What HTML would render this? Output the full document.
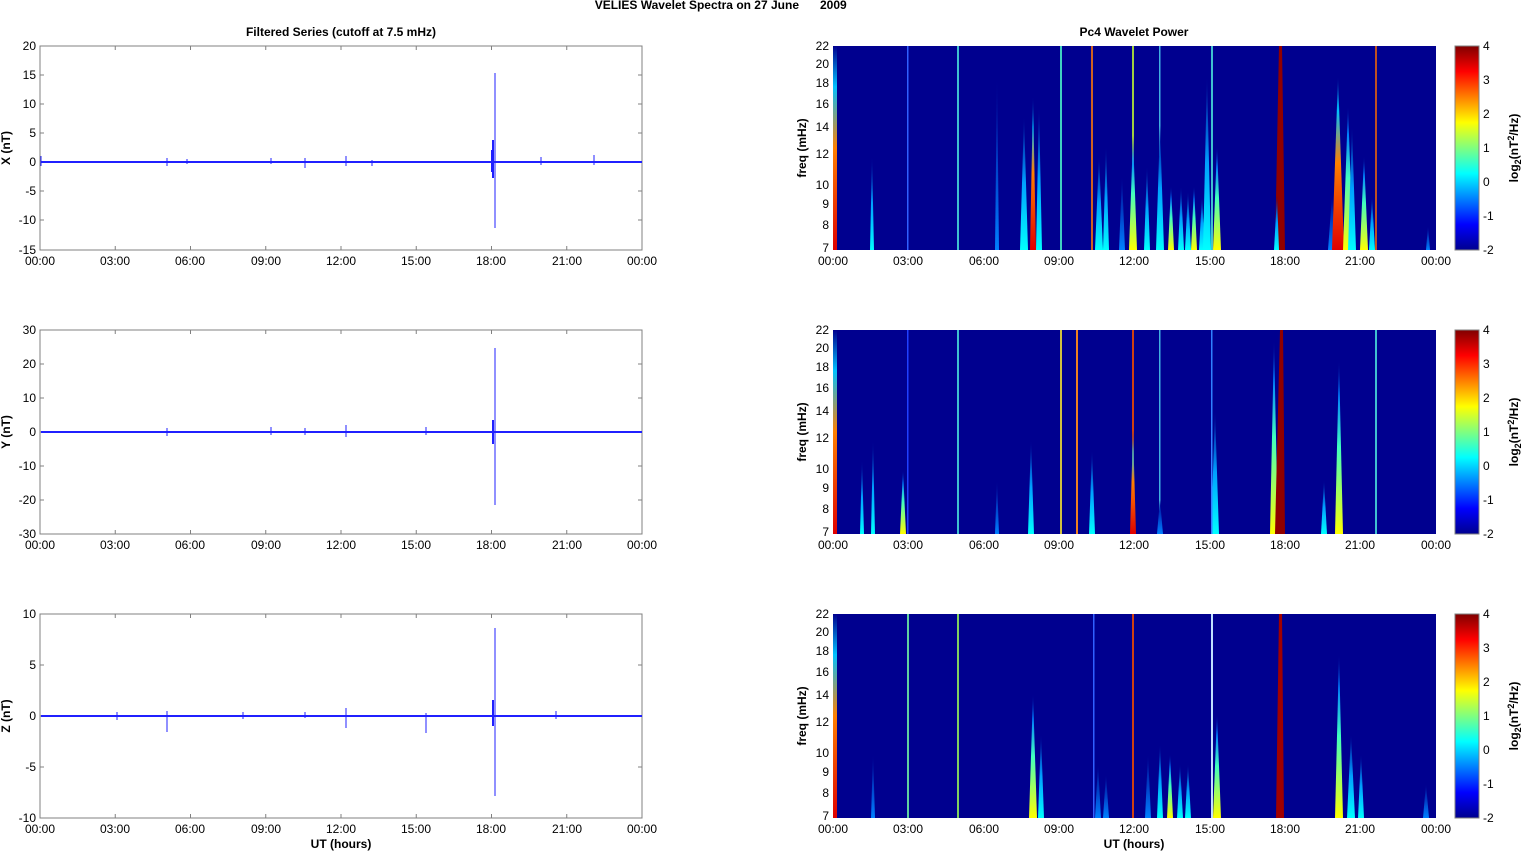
<!DOCTYPE html>
<html><head><meta charset="utf-8"><style>
html,body{margin:0;padding:0;background:#fff;width:1522px;height:851px;overflow:hidden}
svg{display:block;font-family:"Liberation Sans",Arial,sans-serif;font-size:12px}
.t{fill:#000}
.b{font-weight:bold}
.ax{fill:#fff;stroke:#808080;stroke-width:1}
</style></head><body>
<svg width="1522" height="851" viewBox="0 0 1522 851" xmlns="http://www.w3.org/2000/svg">
<defs>
<linearGradient id="jet" x1="0" y1="1" x2="0" y2="0">
<stop offset="0" stop-color="#00008f"/><stop offset="0.125" stop-color="#0000ff"/><stop offset="0.375" stop-color="#00ffff"/><stop offset="0.625" stop-color="#ffff00"/><stop offset="0.875" stop-color="#ff0000"/><stop offset="1" stop-color="#800000"/>
</linearGradient>
<linearGradient id="gr" x1="0" y1="1" x2="0" y2="0"><stop offset="0" stop-color="#e00000"/><stop offset="0.5" stop-color="#ff8000"/><stop offset="0.8" stop-color="#00c0ff"/><stop offset="1" stop-color="#00008f"/></linearGradient>
<linearGradient id="gy" x1="0" y1="1" x2="0" y2="0"><stop offset="0" stop-color="#ffff00"/><stop offset="0.5" stop-color="#40ffc0"/><stop offset="0.8" stop-color="#0080ff"/><stop offset="1" stop-color="#00008f"/></linearGradient>
<linearGradient id="gc" x1="0" y1="1" x2="0" y2="0"><stop offset="0" stop-color="#00ffff"/><stop offset="0.5" stop-color="#00a0ff"/><stop offset="1" stop-color="#00008f"/></linearGradient>
<linearGradient id="gb" x1="0" y1="1" x2="0" y2="0"><stop offset="0" stop-color="#0080ff"/><stop offset="1" stop-color="#00008f"/></linearGradient>
</defs>

<text x="799" y="9" class="t b" text-anchor="end">VELIES Wavelet Spectra on 27 June</text>
<text x="820" y="9" class="t b">2009</text>
<text x="341" y="36" class="t b" text-anchor="middle">Filtered Series (cutoff at 7.5 mHz)</text>
<text x="1134" y="36" class="t b" text-anchor="middle">Pc4 Wavelet Power</text>

<!-- LEFT PANELS -->
<g id="L1">
<rect x="40" y="46" width="602" height="204" class="ax"/>
<g stroke="#808080"><path d="M115.25 46v4M190.5 46v4M265.75 46v4M341 46v4M416.25 46v4M491.5 46v4M566.75 46v4M115.25 250v-4M190.5 250v-4M265.75 250v-4M341 250v-4M416.25 250v-4M491.5 250v-4M566.75 250v-4"/>
<path d="M40 75h4M40 104h4M40 133h4M40 162h4M40 191h4M40 220h4M642 75h-4M642 104h-4M642 133h-4M642 162h-4M642 191h-4M642 220h-4"/></g>
<g fill="none" stroke="#2020ff"><path d="M41 162H642" stroke-width="2"/><path d="M495 73V228M41 156v10M167 158v8M305 158v10M346 156v10M372 160v6M541 157v8M594 155v10M271 158v6M187 159v5" stroke-width="1"/><path d="M493 140v38M492 150v22" stroke-width="2"/></g>
<g class="t" text-anchor="end"><text x="36" y="50">20</text><text x="36" y="79">15</text><text x="36" y="108">10</text><text x="36" y="137">5</text><text x="36" y="166">0</text><text x="36" y="195">-5</text><text x="36" y="224">-10</text><text x="36" y="254">-15</text></g>
<g class="t" text-anchor="middle"><text x="40" y="265">00:00</text><text x="115" y="265">03:00</text><text x="190" y="265">06:00</text><text x="266" y="265">09:00</text><text x="341" y="265">12:00</text><text x="416" y="265">15:00</text><text x="491" y="265">18:00</text><text x="567" y="265">21:00</text><text x="642" y="265">00:00</text></g>
<text transform="translate(10,148) rotate(-90)" class="t b" text-anchor="middle">X (nT)</text>
</g>

<g id="L2">
<rect x="40" y="330" width="602" height="204" class="ax"/>
<g stroke="#808080"><path d="M115.25 330v4M190.5 330v4M265.75 330v4M341 330v4M416.25 330v4M491.5 330v4M566.75 330v4M115.25 534v-4M190.5 534v-4M265.75 534v-4M341 534v-4M416.25 534v-4M491.5 534v-4M566.75 534v-4"/>
<path d="M40 364h4M40 398h4M40 432h4M40 466h4M40 500h4M642 364h-4M642 398h-4M642 432h-4M642 466h-4M642 500h-4"/></g>
<g fill="none" stroke="#2020ff"><path d="M41 432H642" stroke-width="2"/><path d="M495 348V505M167 428v8M271 427v8M346 425v12M426 427v8M305 428v7" stroke-width="1"/><path d="M493 420v24" stroke-width="2"/></g>
<g class="t" text-anchor="end"><text x="36" y="334">30</text><text x="36" y="368">20</text><text x="36" y="402">10</text><text x="36" y="436">0</text><text x="36" y="470">-10</text><text x="36" y="504">-20</text><text x="36" y="538">-30</text></g>
<g class="t" text-anchor="middle"><text x="40" y="549">00:00</text><text x="115" y="549">03:00</text><text x="190" y="549">06:00</text><text x="266" y="549">09:00</text><text x="341" y="549">12:00</text><text x="416" y="549">15:00</text><text x="491" y="549">18:00</text><text x="567" y="549">21:00</text><text x="642" y="549">00:00</text></g>
<text transform="translate(10,432) rotate(-90)" class="t b" text-anchor="middle">Y (nT)</text>
</g>

<g id="L3">
<rect x="40" y="614" width="602" height="204" class="ax"/>
<g stroke="#808080"><path d="M115.25 614v4M190.5 614v4M265.75 614v4M341 614v4M416.25 614v4M491.5 614v4M566.75 614v4M115.25 818v-4M190.5 818v-4M265.75 818v-4M341 818v-4M416.25 818v-4M491.5 818v-4M566.75 818v-4"/>
<path d="M40 665h4M40 716h4M40 767h4M642 665h-4M642 716h-4M642 767h-4"/></g>
<g fill="none" stroke="#2020ff"><path d="M41 716H642" stroke-width="2"/><path d="M495 628V796M167 711v21M346 708v20M426 713v20M117 712v8M243 712v7M556 711v8M305 712v6" stroke-width="1"/><path d="M493 700v26" stroke-width="2"/></g>
<g class="t" text-anchor="end"><text x="36" y="618">10</text><text x="36" y="669">5</text><text x="36" y="720">0</text><text x="36" y="771">-5</text><text x="36" y="822">-10</text></g>
<g class="t" text-anchor="middle"><text x="40" y="833">00:00</text><text x="115" y="833">03:00</text><text x="190" y="833">06:00</text><text x="266" y="833">09:00</text><text x="341" y="833">12:00</text><text x="416" y="833">15:00</text><text x="491" y="833">18:00</text><text x="567" y="833">21:00</text><text x="642" y="833">00:00</text></g>
<text transform="translate(10,716) rotate(-90)" class="t b" text-anchor="middle">Z (nT)</text>
<text x="341" y="848" class="t b" text-anchor="middle">UT (hours)</text>
</g>

<!-- RIGHT PANELS -->
<g transform="translate(833,46)">
<rect x="0" y="0" width="603" height="204" fill="#00008f"/>
<rect x="0" y="0" width="4" height="204" fill="url(#gr)"/>
<path d="M37 204L39 110L41 204Z" fill="url(#gc)"/><rect x="74" y="0" width="1.5" height="204" fill="#3060ff"/>
<rect x="124" y="0" width="2" height="204" fill="#40c0d0"/>
<path d="M162 204L164 30L166 204Z" fill="url(#gb)"/>
<path d="M187 204L191 70L195 204Z" fill="url(#gc)"/><path d="M197 204L200 50L203 204Z" fill="url(#gr)"/><path d="M203 204L206 60L209 204Z" fill="url(#gc)"/>
<rect x="227" y="0" width="2" height="204" fill="#40d0c0"/>
<rect x="258" y="0" width="2" height="204" fill="#d06020"/><path d="M262 204L266 110L270 204Z" fill="url(#gc)"/><path d="M270 204L273 100L276 204Z" fill="url(#gc)"/>
<path d="M286 204L289 130L292 204Z" fill="url(#gb)"/>
<rect x="299" y="0" width="2" height="204" fill="#a0d040"/><path d="M296 204L300 90L304 204Z" fill="url(#gy)"/>
<path d="M311 204L314 120L317 204Z" fill="url(#gc)"/><rect x="326" y="0" width="1.5" height="204" fill="#40b0e0"/><path d="M323 204L327 80L331 204Z" fill="url(#gc)"/>
<path d="M335 204L338 140L341 204Z" fill="url(#gy)"/><path d="M345 204L348 140L351 204Z" fill="url(#gc)"/><path d="M352 204L355 145L358 204Z" fill="url(#gc)"/><path d="M358 204L361 140L364 204Z" fill="url(#gy)"/><path d="M366 204L369 150L372 204Z" fill="url(#gc)"/>
<path d="M370 204L374 30L378 204Z" fill="url(#gc)"/><path d="M380 204L384 100L388 204Z" fill="url(#gy)"/><rect x="378" y="0" width="2" height="204" fill="#40c0d0"/>
<path d="M442 204L446 0L449 0L452 204Z" fill="#900000"/><path d="M441 204L444 150L446 204Z" fill="url(#gc)"/>
<path d="M495 204L499 150L503 204Z" fill="url(#gb)"/>
<path d="M499 204L505 30L511 204Z" fill="url(#gr)"/><path d="M510 204L515 60L520 204Z" fill="url(#gy)"/><path d="M515 204L519 80L523 204Z" fill="url(#gc)"/><path d="M527 204L531 110L535 204Z" fill="url(#gy)"/><path d="M536 204L539 150L542 204Z" fill="url(#gc)"/>
<rect x="542" y="0" width="2" height="204" fill="#c05020"/>
<path d="M593 204L595 180L597 204Z" fill="url(#gb)"/>
</g>
<g transform="translate(833,330)">
<rect x="0" y="0" width="603" height="204" fill="#00008f"/>
<rect x="0" y="0" width="4" height="204" fill="url(#gr)"/>
<path d="M27 204L29 130L31 204Z" fill="url(#gc)"/><path d="M38 204L40 110L42 204Z" fill="url(#gc)"/><path d="M67 204L70 140L73 204Z" fill="url(#gy)"/><rect x="74" y="0" width="1.5" height="204" fill="#2040ff"/>
<rect x="124" y="0" width="2" height="204" fill="#40c0d0"/>
<path d="M162 204L164 150L166 204Z" fill="url(#gb)"/><path d="M195 204L198 110L201 204Z" fill="url(#gc)"/>
<rect x="227" y="0" width="2" height="204" fill="#d0c040"/><rect x="243" y="0" width="2" height="204" fill="#f08020"/><path d="M256 204L259 120L262 204Z" fill="url(#gc)"/>
<rect x="299" y="0" width="2" height="204" fill="#d04010"/><path d="M297 204L300 100L303 204Z" fill="url(#gr)"/><rect x="326" y="0" width="1.5" height="204" fill="#40b0e0"/>
<path d="M324 204L327 170L330 204Z" fill="url(#gb)"/><path d="M378 204L382 80L386 204Z" fill="url(#gc)"/><rect x="378" y="0" width="1.5" height="204" fill="#3080ff"/>
<path d="M437 204L441 10L445 204Z" fill="url(#gy)"/><path d="M442 204L447 0L450 0L452 204Z" fill="#900000"/>
<path d="M488 204L491 150L494 204Z" fill="url(#gc)"/><path d="M502 204L506 30L510 204Z" fill="url(#gy)"/><rect x="542" y="0" width="2" height="204" fill="#40c0d0"/>
</g>
<g transform="translate(833,614)">
<rect x="0" y="0" width="603" height="204" fill="#00008f"/>
<rect x="0" y="0" width="4" height="204" fill="url(#gr)"/>
<path d="M38 204L40 140L42 204Z" fill="url(#gb)"/><rect x="74" y="0" width="2" height="204" fill="#60d0a0"/>
<rect x="124" y="0" width="2" height="204" fill="#80d060"/>
<path d="M196 204L200 80L204 204Z" fill="url(#gy)"/><path d="M205 204L208 120L211 204Z" fill="url(#gc)"/>
<rect x="260" y="0" width="1.5" height="204" fill="#3060ff"/><path d="M262 204L265 150L268 204Z" fill="url(#gb)"/><path d="M270 204L273 160L276 204Z" fill="url(#gb)"/>
<rect x="299" y="0" width="2" height="204" fill="#d04010"/><path d="M312 204L315 140L318 204Z" fill="url(#gb)"/><path d="M324 204L327 130L330 204Z" fill="url(#gc)"/><path d="M334 204L337 140L340 204Z" fill="url(#gy)"/><path d="M344 204L347 150L350 204Z" fill="url(#gc)"/><path d="M352 204L355 150L358 204Z" fill="url(#gc)"/>
<rect x="378" y="0" width="2" height="204" fill="#c0e0ff"/><path d="M380 204L384 100L388 204Z" fill="url(#gy)"/>
<path d="M443 204L446 0L449 0L451 204Z" fill="#a00000"/>
<path d="M502 204L506 40L510 204Z" fill="url(#gy)"/><path d="M514 204L518 120L522 204Z" fill="url(#gc)"/><path d="M525 204L528 140L531 204Z" fill="url(#gc)"/><path d="M590 204L593 170L596 204Z" fill="url(#gb)"/>
</g>

<!-- right axes ticks/labels -->
<g id="RA">
<g class="t" text-anchor="end">
<text x="829" y="50">22</text><text x="829" y="68">20</text><text x="829" y="87">18</text><text x="829" y="108">16</text><text x="829" y="131">14</text><text x="829" y="158">12</text><text x="829" y="189">10</text><text x="829" y="208">9</text><text x="829" y="229">8</text><text x="829" y="252">7</text>
<text x="829" y="334">22</text><text x="829" y="352">20</text><text x="829" y="371">18</text><text x="829" y="392">16</text><text x="829" y="415">14</text><text x="829" y="442">12</text><text x="829" y="473">10</text><text x="829" y="492">9</text><text x="829" y="513">8</text><text x="829" y="536">7</text>
<text x="829" y="618">22</text><text x="829" y="636">20</text><text x="829" y="655">18</text><text x="829" y="676">16</text><text x="829" y="699">14</text><text x="829" y="726">12</text><text x="829" y="757">10</text><text x="829" y="776">9</text><text x="829" y="797">8</text><text x="829" y="820">7</text>
</g>
<g class="t" text-anchor="middle">
<text x="833" y="265">00:00</text><text x="908" y="265">03:00</text><text x="984" y="265">06:00</text><text x="1059" y="265">09:00</text><text x="1134" y="265">12:00</text><text x="1210" y="265">15:00</text><text x="1285" y="265">18:00</text><text x="1360" y="265">21:00</text><text x="1436" y="265">00:00</text>
<text x="833" y="549">00:00</text><text x="908" y="549">03:00</text><text x="984" y="549">06:00</text><text x="1059" y="549">09:00</text><text x="1134" y="549">12:00</text><text x="1210" y="549">15:00</text><text x="1285" y="549">18:00</text><text x="1360" y="549">21:00</text><text x="1436" y="549">00:00</text>
<text x="833" y="833">00:00</text><text x="908" y="833">03:00</text><text x="984" y="833">06:00</text><text x="1059" y="833">09:00</text><text x="1134" y="833">12:00</text><text x="1210" y="833">15:00</text><text x="1285" y="833">18:00</text><text x="1360" y="833">21:00</text><text x="1436" y="833">00:00</text>
<text x="1134" y="848" class="b">UT (hours)</text>
</g>
<text transform="translate(806,148) rotate(-90)" class="t b" text-anchor="middle">freq (mHz)</text>
<text transform="translate(806,432) rotate(-90)" class="t b" text-anchor="middle">freq (mHz)</text>
<text transform="translate(806,716) rotate(-90)" class="t b" text-anchor="middle">freq (mHz)</text>
</g>

<!-- colorbars -->
<g>
<rect x="1455" y="46" width="24" height="204" fill="url(#jet)" stroke="#808080"/>
<rect x="1455" y="330" width="24" height="204" fill="url(#jet)" stroke="#808080"/>
<rect x="1455" y="614" width="24" height="204" fill="url(#jet)" stroke="#808080"/>
<g class="t">
<text x="1483" y="50">4</text><text x="1483" y="84">3</text><text x="1483" y="118">2</text><text x="1483" y="152">1</text><text x="1483" y="186">0</text><text x="1483" y="220">-1</text><text x="1483" y="254">-2</text>
<text x="1483" y="334">4</text><text x="1483" y="368">3</text><text x="1483" y="402">2</text><text x="1483" y="436">1</text><text x="1483" y="470">0</text><text x="1483" y="504">-1</text><text x="1483" y="538">-2</text>
<text x="1483" y="618">4</text><text x="1483" y="652">3</text><text x="1483" y="686">2</text><text x="1483" y="720">1</text><text x="1483" y="754">0</text><text x="1483" y="788">-1</text><text x="1483" y="822">-2</text>
</g>
<text transform="translate(1518,148) rotate(-90)" class="t b" text-anchor="middle">log<tspan font-size="9" dy="3">2</tspan><tspan dy="-3">(nT</tspan><tspan font-size="9" dy="-4">2</tspan><tspan dy="4">/Hz)</tspan></text>
<text transform="translate(1518,432) rotate(-90)" class="t b" text-anchor="middle">log<tspan font-size="9" dy="3">2</tspan><tspan dy="-3">(nT</tspan><tspan font-size="9" dy="-4">2</tspan><tspan dy="4">/Hz)</tspan></text>
<text transform="translate(1518,716) rotate(-90)" class="t b" text-anchor="middle">log<tspan font-size="9" dy="3">2</tspan><tspan dy="-3">(nT</tspan><tspan font-size="9" dy="-4">2</tspan><tspan dy="4">/Hz)</tspan></text>
</g>
</svg>
</body></html>
